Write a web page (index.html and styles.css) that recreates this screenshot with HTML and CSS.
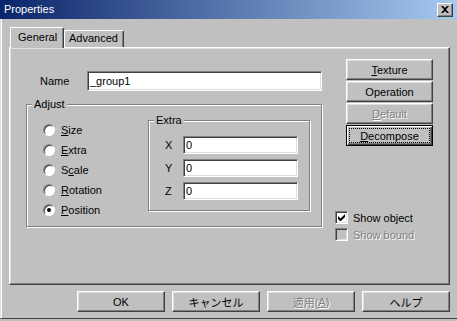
FILE: index.html
```html
<!DOCTYPE html>
<html lang="ja">
<head>
    <meta charset="UTF-8">
    <title>Properties</title>
    <link rel="stylesheet" href="styles.css">
</head>
<body>
<div class="window">
    <div class="titlebar">
        <span class="title">Properties</span>
        <span class="close-btn">
            <svg width="8" height="7" viewBox="0 0 8 7"><path d="M0 0h2l2 2 2-2h2L5 3.5 8 7H6L4 5 2 7H0l3-3.5z" fill="#000"/></svg>
        </span>
    </div>

    <div class="tabs">
        <div class="tab active">General</div>
        <div class="tab">Advanced</div>
    </div>

    <div class="panel">
        <div class="left-col">
            <div class="name-row">
                <span class="name-label">Name</span>
                <div class="field name-field">_group1</div>
            </div>

            <div class="group adjust">
                <span class="group-title">Adjust</span>
                <div class="radios">
                    <div class="radio-row"><span class="radio"></span><span><u>S</u>ize</span></div>
                    <div class="radio-row"><span class="radio"></span><span><u>E</u>xtra</span></div>
                    <div class="radio-row"><span class="radio"></span><span>S<u>c</u>ale</span></div>
                    <div class="radio-row"><span class="radio"></span><span><u>R</u>otation</span></div>
                    <div class="radio-row"><span class="radio checked"></span><span><u>P</u>osition</span></div>
                </div>
                <div class="group extra">
                    <span class="group-title">Extra</span>
                    <div class="axis-row"><span class="axis">X</span><div class="field axis-field">0</div></div>
                    <div class="axis-row"><span class="axis">Y</span><div class="field axis-field">0</div></div>
                    <div class="axis-row"><span class="axis">Z</span><div class="field axis-field">0</div></div>
                </div>
            </div>
        </div>

        <div class="right-col">
            <div class="btn side-btn"><span><u>T</u>exture</span></div>
            <div class="btn side-btn">Operation</div>
            <div class="btn side-btn disabled"><span><u>D</u>efault</span></div>
            <div class="btn side-btn focused"><span><u>D</u>ecompose</span></div>

            <div class="checks">
                <div class="check-row"><span class="checkbox">
                    <svg width="7" height="7" viewBox="0 0 7 7"><path d="M0 2v3l2 2h1l4-4V0L2.5 4.5z" fill="#000"/></svg>
                </span><span>Show object</span></div>
                <div class="check-row disabled"><span class="checkbox off"></span><span>Show bound</span></div>
            </div>
        </div>
    </div>

    <div class="footer">
        <div class="btn foot-btn">OK</div>
        <div class="btn foot-btn">キャンセル</div>
        <div class="btn foot-btn disabled">適用(<u>A</u>)</div>
        <div class="btn foot-btn">ヘルプ</div>
    </div>
</div>
</body>
</html>
```

FILE: styles.css
```css
body { margin: 0; width: 457px; height: 321px; overflow: hidden; background: #c0c0c0; font-family: "Liberation Sans", "Noto Sans CJK JP", sans-serif; font-size: 11px; color: #000; }
.window { box-sizing: border-box; height: 319px; border-bottom: 1px solid #404040; border-left: 1px solid #dfdfdf; box-shadow: inset 1px 0 0 #fff; }

/* タイトルバー */
.titlebar { height: 19px; display: flex; align-items: center; justify-content: space-between; background: linear-gradient(to right, #0a246a, #a6caf0); margin-left: -1px; }
.title { color: #fff; padding-left: 4px; line-height: 19px; }
.close-btn { box-sizing: border-box; width: 16px; height: 14px; margin-right: 4px; display: flex; align-items: center; justify-content: center; background: #c0c0c0; border: 1px solid; border-color: #fff #404040 #404040 #fff; box-shadow: inset -1px -1px 0 #808080; }

/* タブ */
.tabs { display: flex; align-items: flex-end; height: 20px; margin-top: 8px; padding-left: 9px; }
.tab { box-sizing: border-box; background: #c0c0c0; border-top: 1px solid #fff; border-left: 1px solid #fff; border-right: 1px solid #404040; box-shadow: inset -1px 0 0 #808080; border-radius: 2px 2px 0 0; line-height: 15px; }
.tab.active { width: 54px; height: 21px; margin-bottom: -1px; padding: 2px 0 0 7px; position: relative; z-index: 1; }
.tab:not(.active) { width: 60px; height: 17px; padding-left: 4px; }

/* パネル */
.panel { box-sizing: border-box; width: 441px; height: 238px; margin-left: 8px; display: flex; align-items: flex-start; padding-left: 16px; border: 1px solid; border-color: #fff #404040 #404040 #fff; box-shadow: inset -1px -1px 0 #808080, inset 1px 1px 0 #dfdfdf; }
.left-col { width: 296px; margin-top: 23px; }
.right-col { width: 98px; margin-top: 11px; margin-left: 13px; display: flex; flex-direction: column; align-items: flex-end; gap: 1px; }

.name-row { display: flex; height: 20px; align-items: center; }
.name-label { width: 61px; box-sizing: border-box; padding-left: 14px; }
.field { box-sizing: border-box; background: #fff; border: 1px solid; border-color: #808080 #fff #fff #808080; box-shadow: inset 1px 1px 0 #404040, inset -1px -1px 0 #dfdfdf; padding-left: 2px; display: flex; align-items: center; }
.name-field { width: 235px; height: 20px; }

/* グループボックス */
.group { position: relative; box-sizing: border-box; border: 1px solid #808080; box-shadow: inset 1px 1px 0 #fff, 1px 1px 0 #fff; }
.group-title { position: absolute; top: -8px; left: 5px; padding: 0 2px; background: #c0c0c0; line-height: 14px; }
.adjust { width: 296px; height: 123px; margin-top: 13px; display: flex; align-items: flex-start; padding: 15px 0 0 16px; }
.radios { width: 105px; }
.radio-row { display: flex; align-items: center; height: 20px; gap: 6px; }
.radio { box-sizing: border-box; width: 12px; height: 12px; border-radius: 50%; background: #fff; border: 1px solid; border-color: #808080 #fff #fff #808080; box-shadow: inset 1px 1px 0 #404040; display: flex; align-items: center; justify-content: center; }
.radio.checked::after { content: ""; width: 4px; height: 4px; border-radius: 50%; background: #000; }

.extra { width: 162px; height: 91px; padding: 15px 0 0 16px; display: flex; flex-direction: column; gap: 5px; }
.axis-row { display: flex; align-items: center; height: 18px; }
.axis { width: 18px; }
.axis-field { width: 115px; height: 18px; }

/* ボタン */
.btn { box-sizing: border-box; height: 21px; display: flex; align-items: center; justify-content: center; background: #c0c0c0; border: 1px solid; border-color: #fff #404040 #404040 #fff; box-shadow: inset -1px -1px 0 #808080, inset 1px 1px 0 #dfdfdf; }
.btn.disabled { color: #808080; text-shadow: 1px 1px 0 #fff; }
.btn.focused { border-color: #000; box-shadow: inset 1px 1px 0 #fff, inset -1px -1px 0 #404040, inset -2px -2px 0 #808080; outline: 1px dotted #000; outline-offset: -4px; }
.side-btn { width: 87px; }

.checks { align-self: flex-start; margin-top: 62px; }
.check-row { display: flex; align-items: center; height: 17px; gap: 5px; }
.check-row.disabled { color: #808080; text-shadow: 1px 1px 0 #fff; }
.checkbox { box-sizing: border-box; width: 13px; height: 13px; background: #fff; border: 1px solid; border-color: #808080 #fff #fff #808080; box-shadow: inset 1px 1px 0 #404040, inset -1px -1px 0 #dfdfdf; display: flex; align-items: center; justify-content: center; }
.checkbox.off { background: #c0c0c0; }

.footer { display: flex; justify-content: flex-end; gap: 7px; padding-right: 7px; margin-top: 6px; }
.foot-btn { width: 88px; }
```
